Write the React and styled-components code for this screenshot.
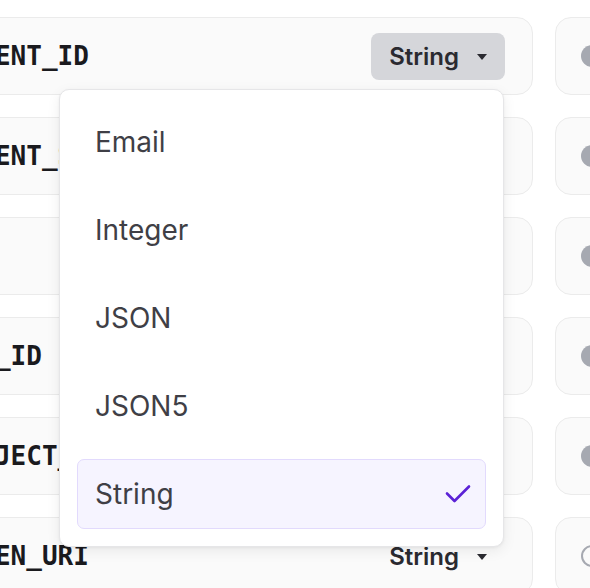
import React from "react";
import styled, { createGlobalStyle } from "styled-components";

const Global = createGlobalStyle`
  html, body { margin: 0; padding: 0; background: #ffffff; }
  body { overflow: hidden; width: 590px; height: 588px; }
  * { box-sizing: border-box; }
`;

const Page = styled.div`
  display: flex;
  flex-direction: column;
  gap: 22px;
  padding-top: 17px;
  margin-left: -80px;
  width: 800px;
`;

const Row = styled.div`
  display: grid;
  grid-template-columns: 613px 140px;
  gap: 22px;
  height: 78px;
`;

const KeyCard = styled.div`
  position: relative;
  display: flex;
  align-items: center;
  justify-content: space-between;
  padding: 0 27px;
  background: #fafafa;
  border: 1.5px solid #ebebeb;
  border-radius: 16px;
  z-index: ${(p) => (p.$open ? 5 : 1)};
`;

const KeyName = styled.span`
  font-family: "DejaVu Sans Mono", "Liberation Mono", monospace;
  font-weight: 700;
  font-size: 26px;
  color: #1a1a1e;
  margin-top: -1px;
`;

const SelectWrap = styled.div`
  position: relative;
`;

const TypeButton = styled.button`
  display: flex;
  align-items: center;
  gap: 18px;
  height: 47px;
  padding: 0 18px;
  border: none;
  border-radius: 8px;
  background: ${(p) => (p.$active ? "#d5d6da" : "transparent")};
  font-family: Inter, "Noto Sans", sans-serif;
  font-weight: 600;
  font-size: 24px;
  color: #2a2a30;
  cursor: pointer;
`;

const Caret = styled.span`
  width: 0;
  height: 0;
  border-left: 5.5px solid transparent;
  border-right: 5.5px solid transparent;
  border-top: 6px solid #2a2a30;
  margin-top: 2px;
`;

const Menu = styled.div`
  position: absolute;
  top: calc(100% + 9px);
  right: 1px;
  width: 445px;
  display: flex;
  flex-direction: column;
  gap: 18px;
  padding: 17px;
  background: #ffffff;
  border: 1px solid #e6e6e8;
  border-radius: 10px;
  box-shadow: 0 4px 14px rgba(0, 0, 0, 0.07), 0 1px 3px rgba(0, 0, 0, 0.05);
`;

const MenuItem = styled.div`
  display: flex;
  align-items: center;
  justify-content: space-between;
  height: 70px;
  padding: 0 14px 0 17px;
  border-radius: 7px;
  border: 1.5px solid ${(p) => (p.$selected ? "#e2dafd" : "transparent")};
  background: ${(p) => (p.$selected ? "#f6f4ff" : "transparent")};
  font-family: Inter, "Noto Sans", sans-serif;
  font-size: 28px;
  font-weight: 400;
  color: #3f3f46;
`;

const SideCard = styled.div`
  display: flex;
  align-items: center;
  padding-left: 25px;
  background: #fafafa;
  border: 1.5px solid #ebebeb;
  border-radius: 16px;
`;

const Dot = styled.span`
  width: 22px;
  height: 22px;
  border-radius: 50%;
  background: ${(p) => (p.$empty ? "transparent" : "#a6a9b1")};
  border: ${(p) => (p.$empty ? "2.5px solid #a6a9b1" : "none")};
`;

const Check = () => (
  <svg width="26" height="20" viewBox="0 0 26 20" fill="none">
    <path
      d="M2 9.5 L9.5 17 L24 2.5"
      stroke="#5b21d6"
      strokeWidth="2.6"
      strokeLinecap="round"
      strokeLinejoin="round"
    />
  </svg>
);

const rows = [
  { key: "CLIENT_ID", open: true, active: true },
  { key: "CLIENT_SECRET" },
  { key: "DB" },
  { key: "ORG_ID" },
  { key: "PROJECT_ID" },
  { key: "TOKEN_URI", showType: true, emptyDot: true },
];

const options = ["Email", "Integer", "JSON", "JSON5", "String"];

export default function App() {
  return (
    <>
      <Global />
      <Page>
        {rows.map((r) => (
          <Row key={r.key}>
            <KeyCard $open={r.open}>
              <KeyName>{r.key}</KeyName>
              {(r.open || r.showType) && (
                <SelectWrap>
                  <TypeButton $active={r.active}>
                    String
                    <Caret />
                  </TypeButton>
                  {r.open && (
                    <Menu>
                      {options.map((o) => (
                        <MenuItem key={o} $selected={o === "String"}>
                          {o}
                          {o === "String" && <Check />}
                        </MenuItem>
                      ))}
                    </Menu>
                  )}
                </SelectWrap>
              )}
            </KeyCard>
            <SideCard>
              <Dot $empty={r.emptyDot} />
            </SideCard>
          </Row>
        ))}
      </Page>
    </>
  );
}
